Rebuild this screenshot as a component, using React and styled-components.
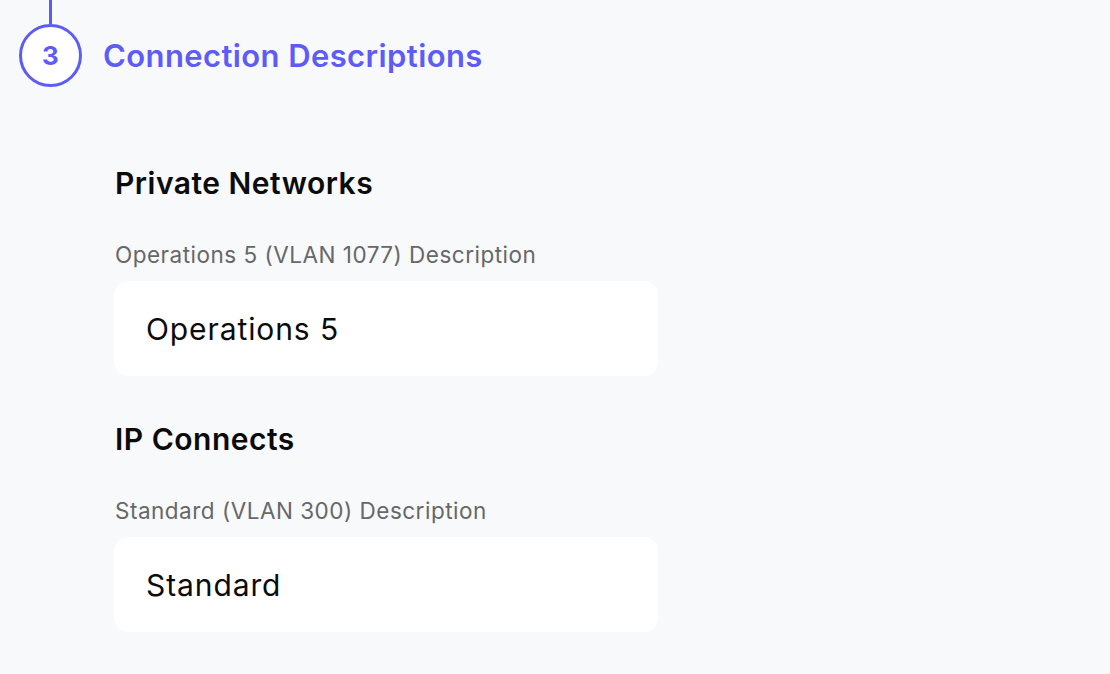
import React from "react";
import styled, { createGlobalStyle } from "styled-components";

const GlobalStyle = createGlobalStyle`
  html, body {
    margin: 0;
    padding: 0;
    background: #f8f9fb;
    font-family: Inter, "Noto Sans", "Liberation Sans", sans-serif;
  }
`;

const Page = styled.div`
  width: 1110px;
  height: 674px;
  overflow: hidden;
  background: #f8f9fb;
`;

const StepHeader = styled.div`
  display: flex;
  align-items: center;
  gap: 21px;
  padding-left: 19px;
`;

const StepMarker = styled.div`
  display: flex;
  flex-direction: column;
  align-items: center;
`;

const Connector = styled.div`
  width: 3px;
  height: 24px;
  background: #5e5cf6;
`;

const Circle = styled.div`
  width: 57px;
  height: 57px;
  border: 3px solid #5e5cf6;
  border-radius: 50%;
  background: #ffffff;
  display: flex;
  align-items: center;
  justify-content: center;
  color: #5e5cf6;
  font-size: 26px;
  font-weight: 700;
`;

const StepTitle = styled.h2`
  margin: 24px 0 0;
  font-size: 31px;
  font-weight: 600;
  color: #5e5cf6;
  letter-spacing: 0.4px;
`;

const Body = styled.div`
  padding: 79px 0 0 114px;
  display: flex;
  flex-direction: column;
`;

const Section = styled.section`
  display: flex;
  flex-direction: column;
  margin-bottom: 46px;
`;

const SectionTitle = styled.h3`
  margin: 0 0 41px 1px;
  font-size: 30px;
  line-height: 34px;
  font-weight: 600;
  letter-spacing: 0.5px;
  color: #0b0b0b;
`;

const Label = styled.label`
  margin: 0 0 12px 1px;
  font-size: 22.5px;
  line-height: 28px;
  letter-spacing: 0.5px;
  color: #666769;
`;

const Field = styled.input`
  width: 544px;
  height: 95px;
  box-sizing: border-box;
  border: none;
  border-radius: 14px;
  background: #ffffff;
  padding: 0 32px;
  font-family: inherit;
  font-size: 30px;
  letter-spacing: 0.9px;
  color: #0b0b0b;
  outline: none;
`;

const groups = [
  { title: "Private Networks", label: "Operations 5 (VLAN 1077) Description", value: "Operations 5" },
  { title: "IP Connects", label: "Standard (VLAN 300) Description", value: "Standard" },
];

export default function App() {
  return (
    <Page>
      <GlobalStyle />
      <StepHeader>
        <StepMarker>
          <Connector />
          <Circle>3</Circle>
        </StepMarker>
        <StepTitle>Connection Descriptions</StepTitle>
      </StepHeader>
      <Body>
        {groups.map((g) => (
          <Section key={g.title}>
            <SectionTitle>{g.title}</SectionTitle>
            <Label>{g.label}</Label>
            <Field defaultValue={g.value} />
          </Section>
        ))}
      </Body>
    </Page>
  );
}
